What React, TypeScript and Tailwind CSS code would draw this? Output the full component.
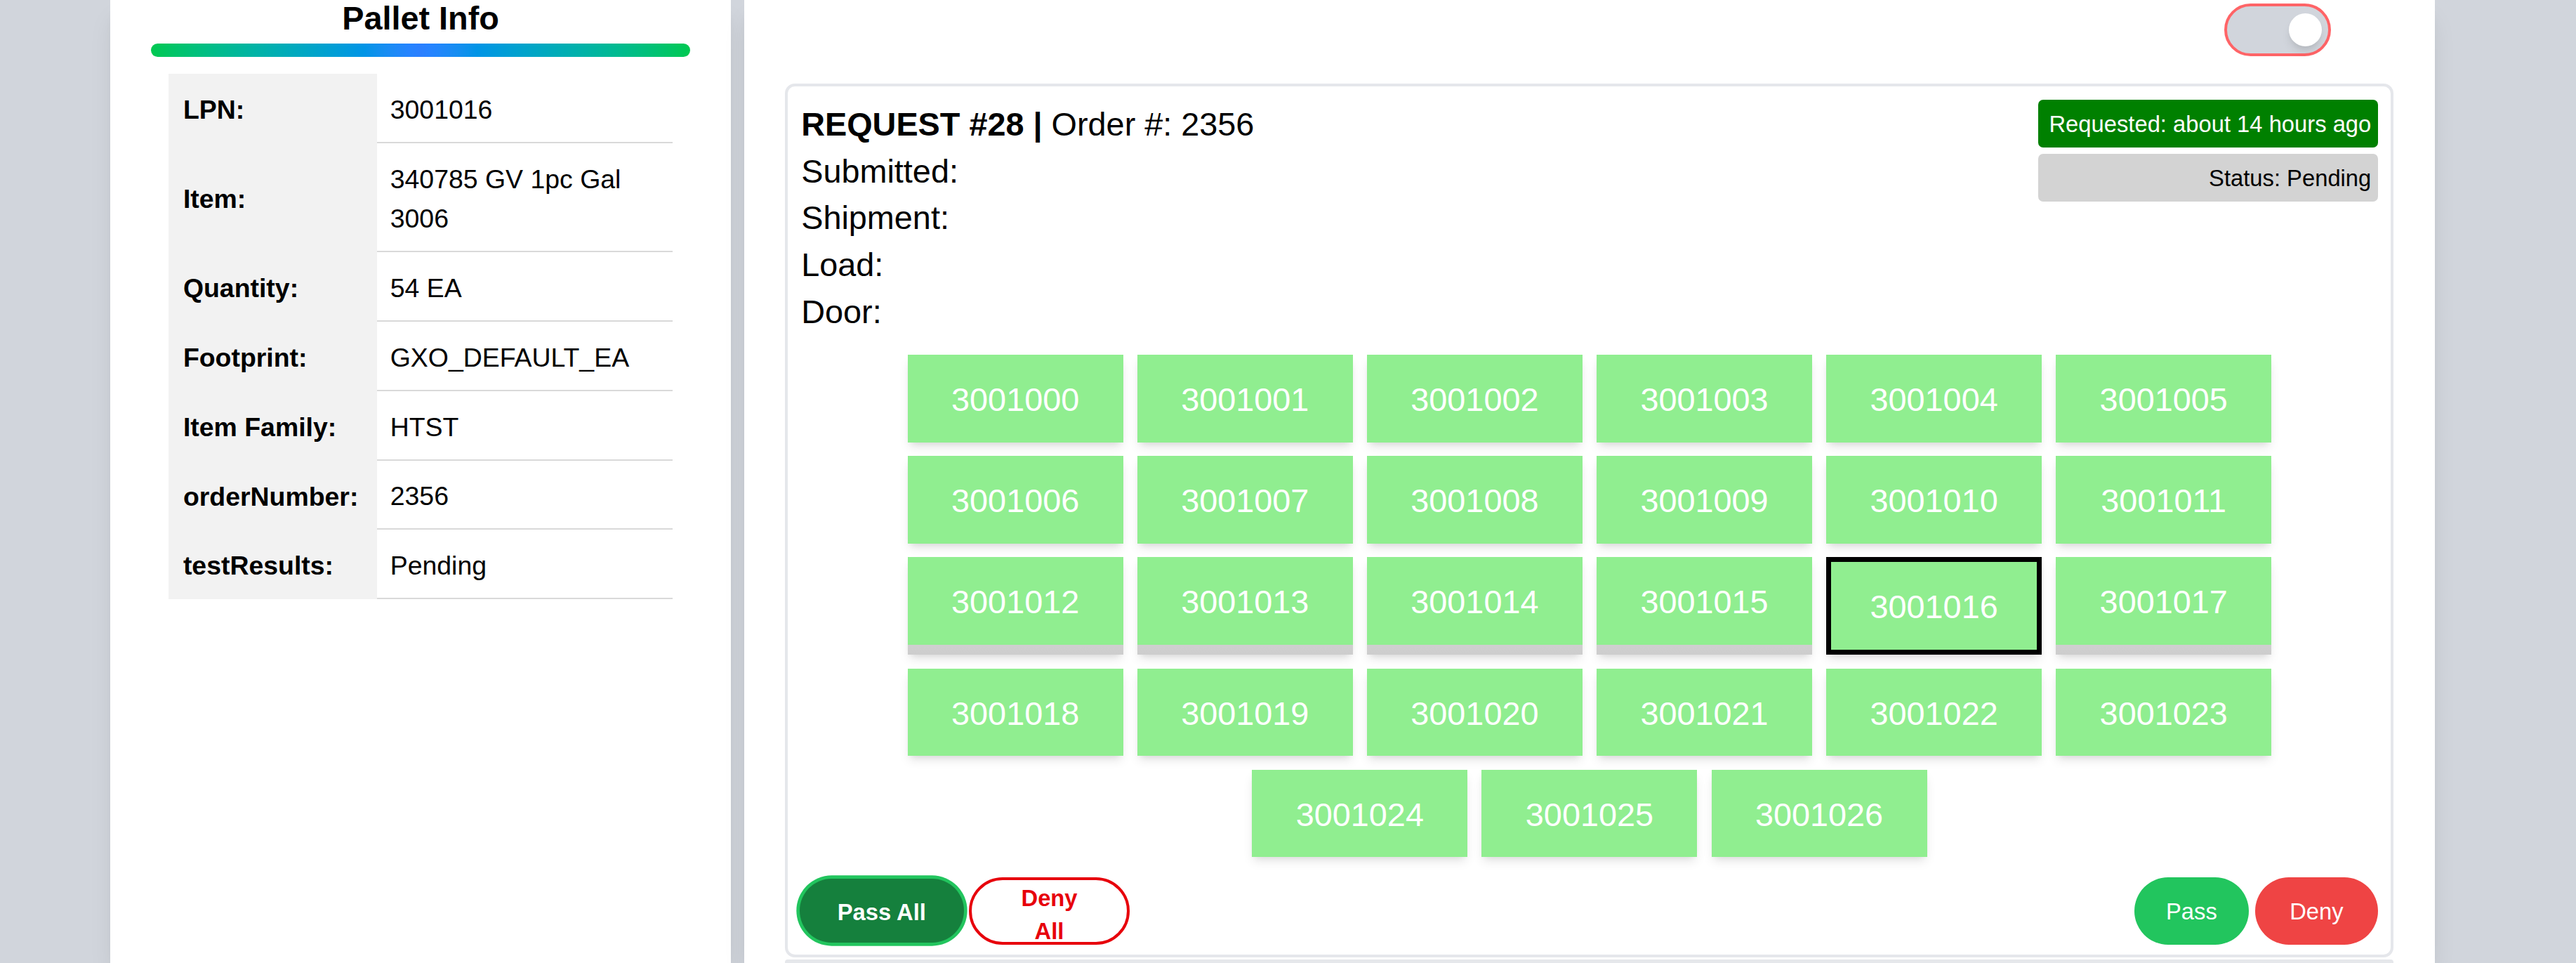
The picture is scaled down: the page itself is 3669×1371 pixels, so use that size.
import React from 'react';

// Pallet info rows shown in the left panel
const palletRows: { label: string; value: string }[] = [
  { label: 'LPN:', value: '3001016' },
  { label: 'Item:', value: '340785 GV 1pc Gal 3006' },
  { label: 'Quantity:', value: '54 EA' },
  { label: 'Footprint:', value: 'GXO_DEFAULT_EA' },
  { label: 'Item Family:', value: 'HTST' },
  { label: 'orderNumber:', value: '2356' },
  { label: 'testResults:', value: 'Pending' },
];

const lpns = Array.from({ length: 27 }, (_, i) => String(3001000 + i));
const selectedLpn = '3001016';

const PalletInfo: React.FC = () => (
  <div className="w-[378px] shrink-0 bg-white shadow-lg flex flex-col items-center">
    <h2 className="mt-[2.2px] text-xl leading-[18px] font-bold text-black">Pallet Info</h2>
    <div className="mt-[6.3px] w-[328px] h-2 rounded-full bg-linear-to-r from-green-500 via-blue-500 to-green-500" />
    <div className="mt-[10.4px] w-[307px] flex flex-col text-base leading-6">
      {palletRows.map((row) => (
        <div key={row.label} className="flex">
          <div className="w-[127px] shrink-0 bg-[#f2f2f2] pl-[9px] pr-2 pt-[1.5px] flex items-center font-bold">
            {row.label}
          </div>
          <div className="flex-1 border-b border-[#d9d9d9] px-2 pt-[9.8px] pb-[7.6px] flex items-center">
            {row.value}
          </div>
        </div>
      ))}
    </div>
  </div>
);

const PalletTile: React.FC<{ lpn: string }> = ({ lpn }) => {
  const selected = lpn === selectedLpn;
  return (
    <div
      className={
        selected
          ? 'w-[131.2px] bg-[#d6d6d6] shadow-md border-[3px] border-black'
          : 'w-[131.2px] bg-linear-to-b from-[#e2e2e2] to-[#cdcdcd] shadow-md'
      }
    >
      <div className="h-[53.3px] pt-[2px] bg-[#90ee90] flex items-center justify-center text-white text-xl">
        {lpn}
      </div>
    </div>
  );
};

const RequestCard: React.FC = () => (
  <div className="mx-[25px] mt-[17px] border-2 border-gray-200 rounded-md px-2 pt-2 pb-[6.3px]">
    <div className="flex justify-between items-start">
      <div className="pt-[0.8px] text-xl leading-[28.5px] text-black">
        <div>
          <span className="font-bold">REQUEST #28 |</span> Order #: 2356
        </div>
        <div>Submitted:</div>
        <div>Shipment:</div>
        <div>Load:</div>
        <div>Door:</div>
      </div>
      <div className="w-[206.5px] flex flex-col gap-[4px] text-sm leading-5 text-right">
        <div className="h-[29px] pt-[1px] rounded-[3px] bg-[#008000] text-white px-1 flex items-center justify-end">
          Requested: about 14 hours ago
        </div>
        <div className="h-[29px] pt-[1px] rounded-[3px] bg-[#d3d3d3] text-black px-1 flex items-center justify-end">
          Status: Pending
        </div>
      </div>
    </div>

    <div className="mt-[11.9px] flex flex-wrap justify-center gap-x-[8.6px] gap-y-[8.3px]">
      {lpns.map((lpn) => (
        <PalletTile key={lpn} lpn={lpn} />
      ))}
    </div>

    <div className="mt-[12.1px] h-[41px] flex items-center justify-between">
      <div className="flex items-center gap-[3px] ml-[-1px]">
        <button className="w-[100px] h-[39px] pt-[2px] rounded-full bg-[#15803d] ring-2 ring-[#22c55e] text-white text-sm font-bold">
          Pass All
        </button>
        <button className="w-[98px] h-[41px] pt-[1.5px] rounded-full border-2 border-red-600 bg-white text-red-600 text-sm leading-5 font-bold px-6 flex items-start justify-center text-center">
          Deny All
        </button>
      </div>
      <div className="flex items-center gap-1">
        <button className="w-[69.5px] h-[41px] pt-[1px] rounded-full bg-[#22c55e] text-white text-sm">Pass</button>
        <button className="w-[74.6px] h-[41px] pt-[1px] rounded-full bg-[#ef4444] text-white text-sm">Deny</button>
      </div>
    </div>
  </div>
);

const App: React.FC = () => {
  return (
    <div className="h-screen w-screen overflow-hidden bg-gray-300">
      <div className="[zoom:2.34] h-[586px] flex pl-[67px] gap-[8px] text-black font-['Liberation_Sans',Arial,sans-serif]">
        <PalletInfo />
        <div className="w-[1029px] shrink-0 bg-white shadow-lg flex flex-col">
          <div className="pt-[2px] pr-[63px] flex justify-end">
            <div className="w-[65px] h-[32px] rounded-full border-2 border-red-400 bg-gray-300 flex items-center justify-end pr-[4px]">
              <div className="w-5 h-5 rounded-full bg-white shadow-md" />
            </div>
          </div>
          <RequestCard />
          <div className="mx-[25px] mt-[1px] h-[40px] border-2 border-gray-200 rounded-md" />
        </div>
      </div>
    </div>
  );
};

export default App;
